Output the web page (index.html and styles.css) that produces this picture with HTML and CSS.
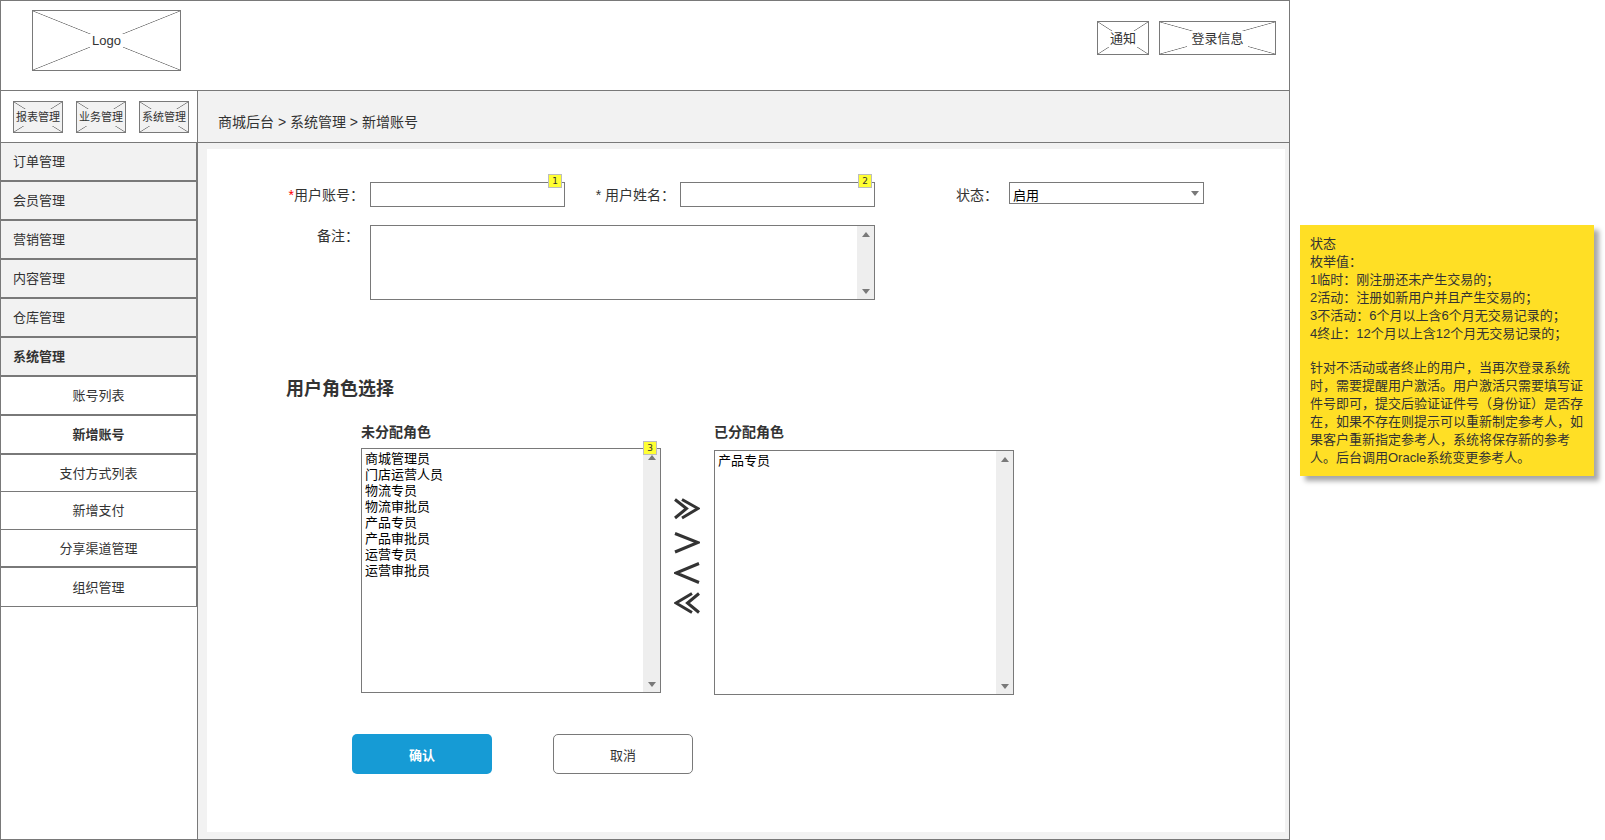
FILE: index.html
```html
<!DOCTYPE html>
<html lang="zh-CN">
<head>
    <meta charset="UTF-8">
    <title>新增账号</title>
    <link rel="stylesheet" href="styles.css">
</head>
<body>
    <div class="page">
        <div class="frame">
            <header class="top-bar">
                <div class="placeholder logo"><span>Logo</span></div>
                <div class="top-actions">
                    <div class="placeholder notice"><span>通知</span></div>
                    <div class="placeholder login"><span>登录信息</span></div>
                </div>
            </header>

            <div class="main-row">
                <aside class="sidebar">
                    <div class="tool-row">
                        <div class="placeholder tool"><span>报表管理</span></div>
                        <div class="placeholder tool"><span>业务管理</span></div>
                        <div class="placeholder tool"><span>系统管理</span></div>
                    </div>
                    <nav>
                        <div class="nav-item">订单管理</div>
                        <div class="nav-item">会员管理</div>
                        <div class="nav-item">营销管理</div>
                        <div class="nav-item">内容管理</div>
                        <div class="nav-item">仓库管理</div>
                        <div class="nav-item bold">系统管理</div>
                        <div class="nav-sub">账号列表</div>
                        <div class="nav-sub bold">新增账号</div>
                        <div class="nav-sub thin short">支付方式列表</div>
                        <div class="nav-sub thin mid">新增支付</div>
                        <div class="nav-sub mid">分享渠道管理</div>
                        <div class="nav-sub thin">组织管理</div>
                    </nav>
                </aside>

                <section class="content">
                    <div class="breadcrumb">商城后台 &gt; 系统管理 &gt; 新增账号</div>
                    <div class="content-bg">
                        <div class="panel">
                            <div class="field-row">
                                <label class="field-label label-account"><em>*</em>用户账号：</label>
                                <div class="input-wrap">
                                    <input class="text-input" type="text">
                                    <span class="badge">1</span>
                                </div>
                                <label class="field-label label-name">* 用户姓名：</label>
                                <div class="input-wrap">
                                    <input class="text-input" type="text">
                                    <span class="badge">2</span>
                                </div>
                                <label class="field-label label-status">状态：</label>
                                <div class="select-box">
                                    <span>启用</span>
                                    <i class="arrow-down"></i>
                                </div>
                            </div>

                            <div class="remark-row">
                                <label class="field-label label-remark">备注：</label>
                                <div class="scroll-box remark-box">
                                    <div class="scroll-body"></div>
                                    <div class="scrollbar"><i class="arrow-up"></i><i class="arrow-down"></i></div>
                                </div>
                            </div>

                            <h2 class="section-title">用户角色选择</h2>

                            <div class="transfer">
                                <div class="transfer-col">
                                    <h3 class="col-title">未分配角色</h3>
                                    <div class="scroll-box list-box">
                                        <div class="scroll-body">
                                            <div>商城管理员</div>
                                            <div>门店运营人员</div>
                                            <div>物流专员</div>
                                            <div>物流审批员</div>
                                            <div>产品专员</div>
                                            <div>产品审批员</div>
                                            <div>运营专员</div>
                                            <div>运营审批员</div>
                                        </div>
                                        <div class="scrollbar"><i class="arrow-up"></i><i class="arrow-down"></i></div>
                                        <span class="badge badge-list">3</span>
                                    </div>
                                </div>

                                <div class="transfer-btns">
                                    <svg class="first" width="26" height="22" viewBox="0 0 26 22"><path d="M1 1.5 L12.5 10.5 L1 20 M8 1.5 L24 10.5 L8 20"/></svg>
                                    <svg width="26" height="22" viewBox="0 0 26 22"><path d="M1 1.5 L24 10.5 L1 20"/></svg>
                                    <svg width="26" height="22" viewBox="0 0 26 22"><path d="M25 1.5 L2 11 L25 20.5"/></svg>
                                    <svg width="26" height="22" viewBox="0 0 26 22"><path d="M18 1.5 L2 11 L18 20.5 M25 1.5 L13.5 11 L25 20.5"/></svg>
                                </div>

                                <div class="transfer-col">
                                    <h3 class="col-title right-title">已分配角色</h3>
                                    <div class="scroll-box list-box">
                                        <div class="scroll-body">
                                            <div>产品专员</div>
                                        </div>
                                        <div class="scrollbar"><i class="arrow-up"></i><i class="arrow-down"></i></div>
                                    </div>
                                </div>
                            </div>

                            <div class="btn-row">
                                <button class="btn btn-primary">确认</button>
                                <button class="btn">取消</button>
                            </div>
                        </div>
                    </div>
                </section>
            </div>
        </div>

        <aside class="note">
            <p>状态<br>
            枚举值：<br>
            1临时：刚注册还未产生交易的；<br>
            2活动：注册如新用户并且产生交易的；<br>
            3不活动：6个月以上含6个月无交易记录的；<br>
            4终止：12个月以上含12个月无交易记录的；</p>
            <p>针对不活动或者终止的用户，当再次登录系统时，需要提醒用户激活。用户激活只需要填写证件号即可，提交后验证证件号（身份证）是否存在，如果不存在则提示可以重新制定参考人，如果客户重新指定参考人，系统将保存新的参考人。后台调用Oracle系统变更参考人。</p>
        </aside>
    </div>
</body>
</html>
```

FILE: styles.css
```css
* {
    box-sizing: border-box;
}
html, body {
    margin: 0;
    height: 100%;
    overflow: hidden;
}
body {
    font-family: "Liberation Sans", "Noto Sans CJK SC", sans-serif;
    font-size: 13px;
    color: #333;
    background: #fff;
}
.page {
    display: flex;
    align-items: flex-start;
}
.frame {
    width: 1290px;
    height: 840px;
    flex: none;
    border: 1px solid #797979;
    display: flex;
    flex-direction: column;
}

/* crossed boxes */
.placeholder {
    --cross-bg: #fff;
    display: flex;
    align-items: center;
    justify-content: center;
    border: 1px solid #797979;
    background:
        linear-gradient(to top right, transparent calc(50% - 0.7px), #797979, transparent calc(50% + 0.7px)),
        linear-gradient(to bottom right, transparent calc(50% - 0.7px), #797979, transparent calc(50% + 0.7px)),
        var(--cross-bg);
}
.placeholder span {
    background: var(--cross-bg);
    padding: 0 1px;
    line-height: 16px;
}

.top-bar {
    height: 90px;
    flex: none;
    border-bottom: 1px solid #797979;
    display: flex;
    justify-content: space-between;
    padding: 9px 13px 0 31px;
}
.logo {
    width: 149px;
    height: 61px;
}
.logo span {
    padding: 0 2px;
    line-height: 14px;
}
.top-actions {
    display: flex;
    gap: 10px;
    padding-top: 11px;
}
.notice {
    width: 52px;
    height: 34px;
    padding-top: 2px;
}
.login {
    width: 117px;
    height: 34px;
    padding-top: 2px;
}
.notice span,
.login span {
    padding: 0 4px;
}

.main-row {
    flex: 1;
    display: flex;
    min-height: 0;
}
.sidebar {
    width: 197px;
    flex: none;
    border-right: 1px solid #797979;
}
.tool-row {
    height: 52px;
    border-bottom: 1px solid #797979;
    display: flex;
    gap: 13px;
    padding: 10px 0 0 12px;
}
.tool {
    --cross-bg: #f2f2f2;
    width: 50px;
    height: 32px;
    font-size: 11px;
}
.tool span {
    display: block;
    width: 100%;
    padding: 0;
    line-height: 17px;
    text-align: center;
}

.nav-item,
.nav-sub {
    height: 39px;
    display: flex;
    align-items: center;
    border-bottom: 2px solid #797979;
    border-right: 1px solid #797979;
    padding-bottom: 2px;
}
.nav-item {
    padding-left: 12px;
    background: #f2f2f2;
}
.nav-sub {
    justify-content: center;
    background: #fff;
}
.nav-sub.short {
    height: 37px;
}
.nav-sub.mid {
    height: 38px;
}
.nav-sub.thin {
    border-bottom-width: 1px;
}
.bold {
    font-weight: 700;
}

.content {
    flex: 1;
    display: flex;
    flex-direction: column;
    min-width: 0;
}
.breadcrumb {
    height: 52px;
    flex: none;
    background: #f2f2f2;
    border-bottom: 1px solid #797979;
    padding: 21px 0 0 20px;
    font-size: 14px;
    line-height: 20px;
}
.content-bg {
    flex: 1;
    background: #f2f2f2;
    padding: 6px 4px 7px 9px;
    min-height: 0;
}
.panel {
    height: 100%;
    background: #fff;
    padding-top: 33px;
}

/* form fields */
.field-row {
    display: flex;
    align-items: flex-start;
}
.field-label {
    flex: none;
    font-size: 14px;
    line-height: 27px;
    text-align: right;
}
.field-label em {
    color: #f00;
    font-style: normal;
}
.label-account {
    width: 157px;
    margin-right: 6px;
}
.label-name {
    width: 110px;
    margin-right: 5px;
}
.label-status {
    width: 123px;
    margin-right: 11px;
}
.label-remark {
    width: 152px;
    margin-right: 11px;
    line-height: 22px;
}
.input-wrap {
    position: relative;
    width: 195px;
    height: 25px;
}
.text-input {
    display: block;
    width: 100%;
    height: 100%;
    margin: 0;
    border: 1px solid #797979;
    border-radius: 0;
    background: #fff;
    outline: none;
}
.badge {
    position: absolute;
    top: -8px;
    right: 3px;
    width: 14px;
    height: 14px;
    background: #ff3;
    border: 1px solid #bdbdbd;
    font-family: "DejaVu Sans", sans-serif;
    font-size: 9px;
    line-height: 12px;
    text-align: center;
}
.select-box {
    width: 195px;
    height: 22px;
    border: 1px solid #797979;
    display: flex;
    align-items: center;
    justify-content: space-between;
    padding: 5px 4px 0 3px;
    color: #000;
    line-height: 15px;
}
.select-box .arrow-down {
    margin-top: -4px;
}
.arrow-up,
.arrow-down {
    display: block;
    width: 0;
    height: 0;
    border-left: 4.5px solid transparent;
    border-right: 4.5px solid transparent;
}
.arrow-up {
    border-bottom: 5px solid #797979;
}
.arrow-down {
    border-top: 5px solid #797979;
}

.remark-row {
    display: flex;
    align-items: flex-start;
    margin-top: 16px;
}
.scroll-box {
    position: relative;
    display: flex;
    border: 1px solid #797979;
    background: #fff;
}
.remark-box {
    width: 505px;
    height: 75px;
}
.scroll-body {
    flex: 1;
    padding: 2px 3px;
    color: #000;
    line-height: 16px;
}
.scrollbar {
    width: 17px;
    flex: none;
    background: #eee;
    display: flex;
    flex-direction: column;
    align-items: center;
    justify-content: space-between;
    padding: 6px 0 5px;
}

.section-title {
    margin: 77px 0 0 79px;
    font-size: 18px;
    line-height: 24px;
    font-weight: 700;
}

/* role transfer */
.transfer {
    display: flex;
    align-items: flex-start;
    margin: 23px 0 0 154px;
}
.transfer-col {
    width: 300px;
}
.col-title {
    margin: 0 0 8px;
    font-size: 14px;
    line-height: 16px;
    font-weight: 700;
}
.right-title {
    margin-bottom: 10px;
}
.list-box {
    height: 245px;
}
.transfer-btns {
    width: 53px;
    flex: none;
    display: flex;
    flex-direction: column;
    gap: 8px;
    padding: 74px 0 0 13px;
}
.transfer-btns svg {
    display: block;
    fill: none;
    stroke: #333;
    stroke-width: 3;
}
.transfer-btns svg.first {
    margin-bottom: 4px;
}

.btn-row {
    display: flex;
    gap: 61px;
    margin: 39px 0 0 145px;
}
.btn {
    width: 140px;
    height: 40px;
    margin: 0;
    padding: 0;
    border: 1px solid #797979;
    border-radius: 5px;
    background: #fff;
    color: #333;
    font-family: inherit;
    font-size: 13px;
}
.btn-primary {
    border: none;
    background: #169bd5;
    color: #fff;
    font-weight: 700;
}

/* sticky note */
.note {
    width: 294px;
    height: 251px;
    flex: none;
    margin: 225px 0 0 10px;
    padding: 10px 10px 0;
    background: #ffdf25;
    box-shadow: 5px 5px 5px rgba(0, 0, 0, 0.35);
    line-height: 18px;
}
.note p {
    margin: 0 0 16px;
}
```
